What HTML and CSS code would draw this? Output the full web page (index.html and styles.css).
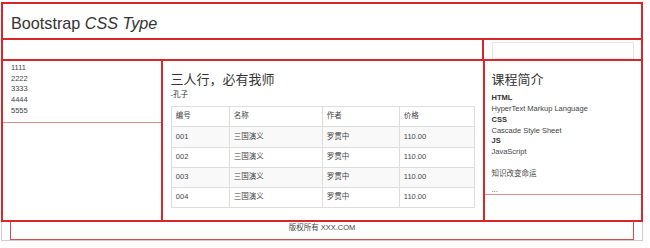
FILE: index.html
```html
<!DOCTYPE html>
<html lang="zh-CN">
<head>
<meta charset="utf-8">
<title>Bootstrap CSS Type</title>
<link rel="stylesheet" href="styles.css">
</head>
<body>
<div class="page">
  <header class="hd"><h2 class="title">Bootstrap <em>CSS Type</em></h2></header>
  <nav class="nav">
    <div class="nav-main"></div>
    <div class="nav-side"><div class="nav-box"></div></div>
  </nav>
  <main class="row">
    <aside class="col-left">
      <div class="list-box">
        <ul class="list">
          <li>1111</li>
          <li>2222</li>
          <li>3333</li>
          <li>4444</li>
          <li>5555</li>
        </ul>
      </div>
    </aside>
    <section class="col-mid">
      <h3 class="heading">三人行，必有我师</h3>
      <p class="quote">-孔子</p>
      <table class="tbl">
        <colgroup>
          <col class="c1"><col class="c2"><col class="c3"><col class="c4">
        </colgroup>
        <thead>
          <tr><th>编号</th><th>名称</th><th>作者</th><th>价格</th></tr>
        </thead>
        <tbody>
          <tr><td>001</td><td>三国演义</td><td>罗贯中</td><td>110.00</td></tr>
          <tr><td>002</td><td>三国演义</td><td>罗贯中</td><td>110.00</td></tr>
          <tr><td>003</td><td>三国演义</td><td>罗贯中</td><td>110.00</td></tr>
          <tr><td>004</td><td>三国演义</td><td>罗贯中</td><td>110.00</td></tr>
        </tbody>
      </table>
    </section>
    <aside class="col-right">
      <div class="intro">
        <h3 class="heading">课程简介</h3>
        <dl class="defs">
          <dt>HTML</dt><dd>HyperText Markup Language</dd>
          <dt>CSS</dt><dd>Cascade Style Sheet</dd>
          <dt>JS</dt><dd>JavaScript</dd>
        </dl>
        <p class="para">知识改变命运</p>
        <p class="para">...</p>
      </div>
    </aside>
  </main>
  <footer class="ft"><div class="ft-in">版权所有 XXX.COM</div></footer>
</div>
</body>
</html>
```

FILE: styles.css
```css
* { box-sizing: border-box; }
html, body { margin: 0; padding: 0; background: #fff; }
body {
  font-family: "Liberation Sans", "Noto Sans CJK SC", sans-serif;
  color: #333;
  font-size: 7.5px;
  line-height: 10.7px;
}
.page { width: 642px; margin: 2px 0 0 1px; }

.hd { height: 38px; border: 2px solid #d9262b; padding: 0 8px; }
.title { margin: 10.4px 0 0; font-size: 16.2px; line-height: 18px; font-weight: normal; }

.nav { display: flex; height: 21px; border: 2px solid #d9262b; border-top: 0; }
.nav-main { flex: 1; }
.nav-side { width: 159px; border-left: 2px solid #d9262b; padding: 1.5px 7px 0 8px; }
.nav-box { height: 17px; border: 1px solid #e6e6e6; }

.row { display: flex; height: 161px; border: 2px solid #d9262b; border-top: 0; }
.col-left { width: 160px; border-right: 2px solid #d9262b; }
.list-box { height: 62px; border-bottom: 1px solid #e08a8c; padding: 2px 8px 0; }
.list { list-style: none; margin: 0; padding: 0; color: #444; }

.col-mid { flex: 1; padding: 0 8px; }
.heading {
  margin: 12px 0 0;
  font-size: 13px;
  line-height: 14.3px;
  font-weight: normal;
}
.quote { margin: 2.3px 0 5.7px; }

.tbl { width: 100%; table-layout: fixed; border-collapse: collapse; border: 1px solid #ddd; }
.c1 { width: 58px; }
.c2 { width: 93px; }
.c3 { width: 77px; }
.c4 { width: 75px; }
.tbl th, .tbl td {
  border: 1px solid #ddd;
  padding: 4.3px;
  text-align: left;
  font-weight: normal;
  line-height: 10.7px;
  color: #444;
}
.tbl tbody tr:nth-child(odd) { background: #f9f9f9; }

.col-right { width: 159px; border-left: 2px solid #d9262b; }
.intro { height: 134px; border-bottom: 1px solid #e08a8c; padding: 0 8px 0 7px; overflow: hidden; }
.defs { margin: 6.2px 0 10.8px; }
.defs dt { font-weight: bold; }
.defs dd { margin: 0; color: #444; }
.para { margin: 0 0 5.4px; color: #444; }

.ft { height: 19px; border: 1px solid #dcc6c6; border-top: 0; }
.ft-in {
  height: 18px;
  margin: 0 8px;
  border: 1px solid #d24c50;
  border-top: 0;
  text-align: center;
  padding-top: 1.2px;
  color: #444;
}
```
